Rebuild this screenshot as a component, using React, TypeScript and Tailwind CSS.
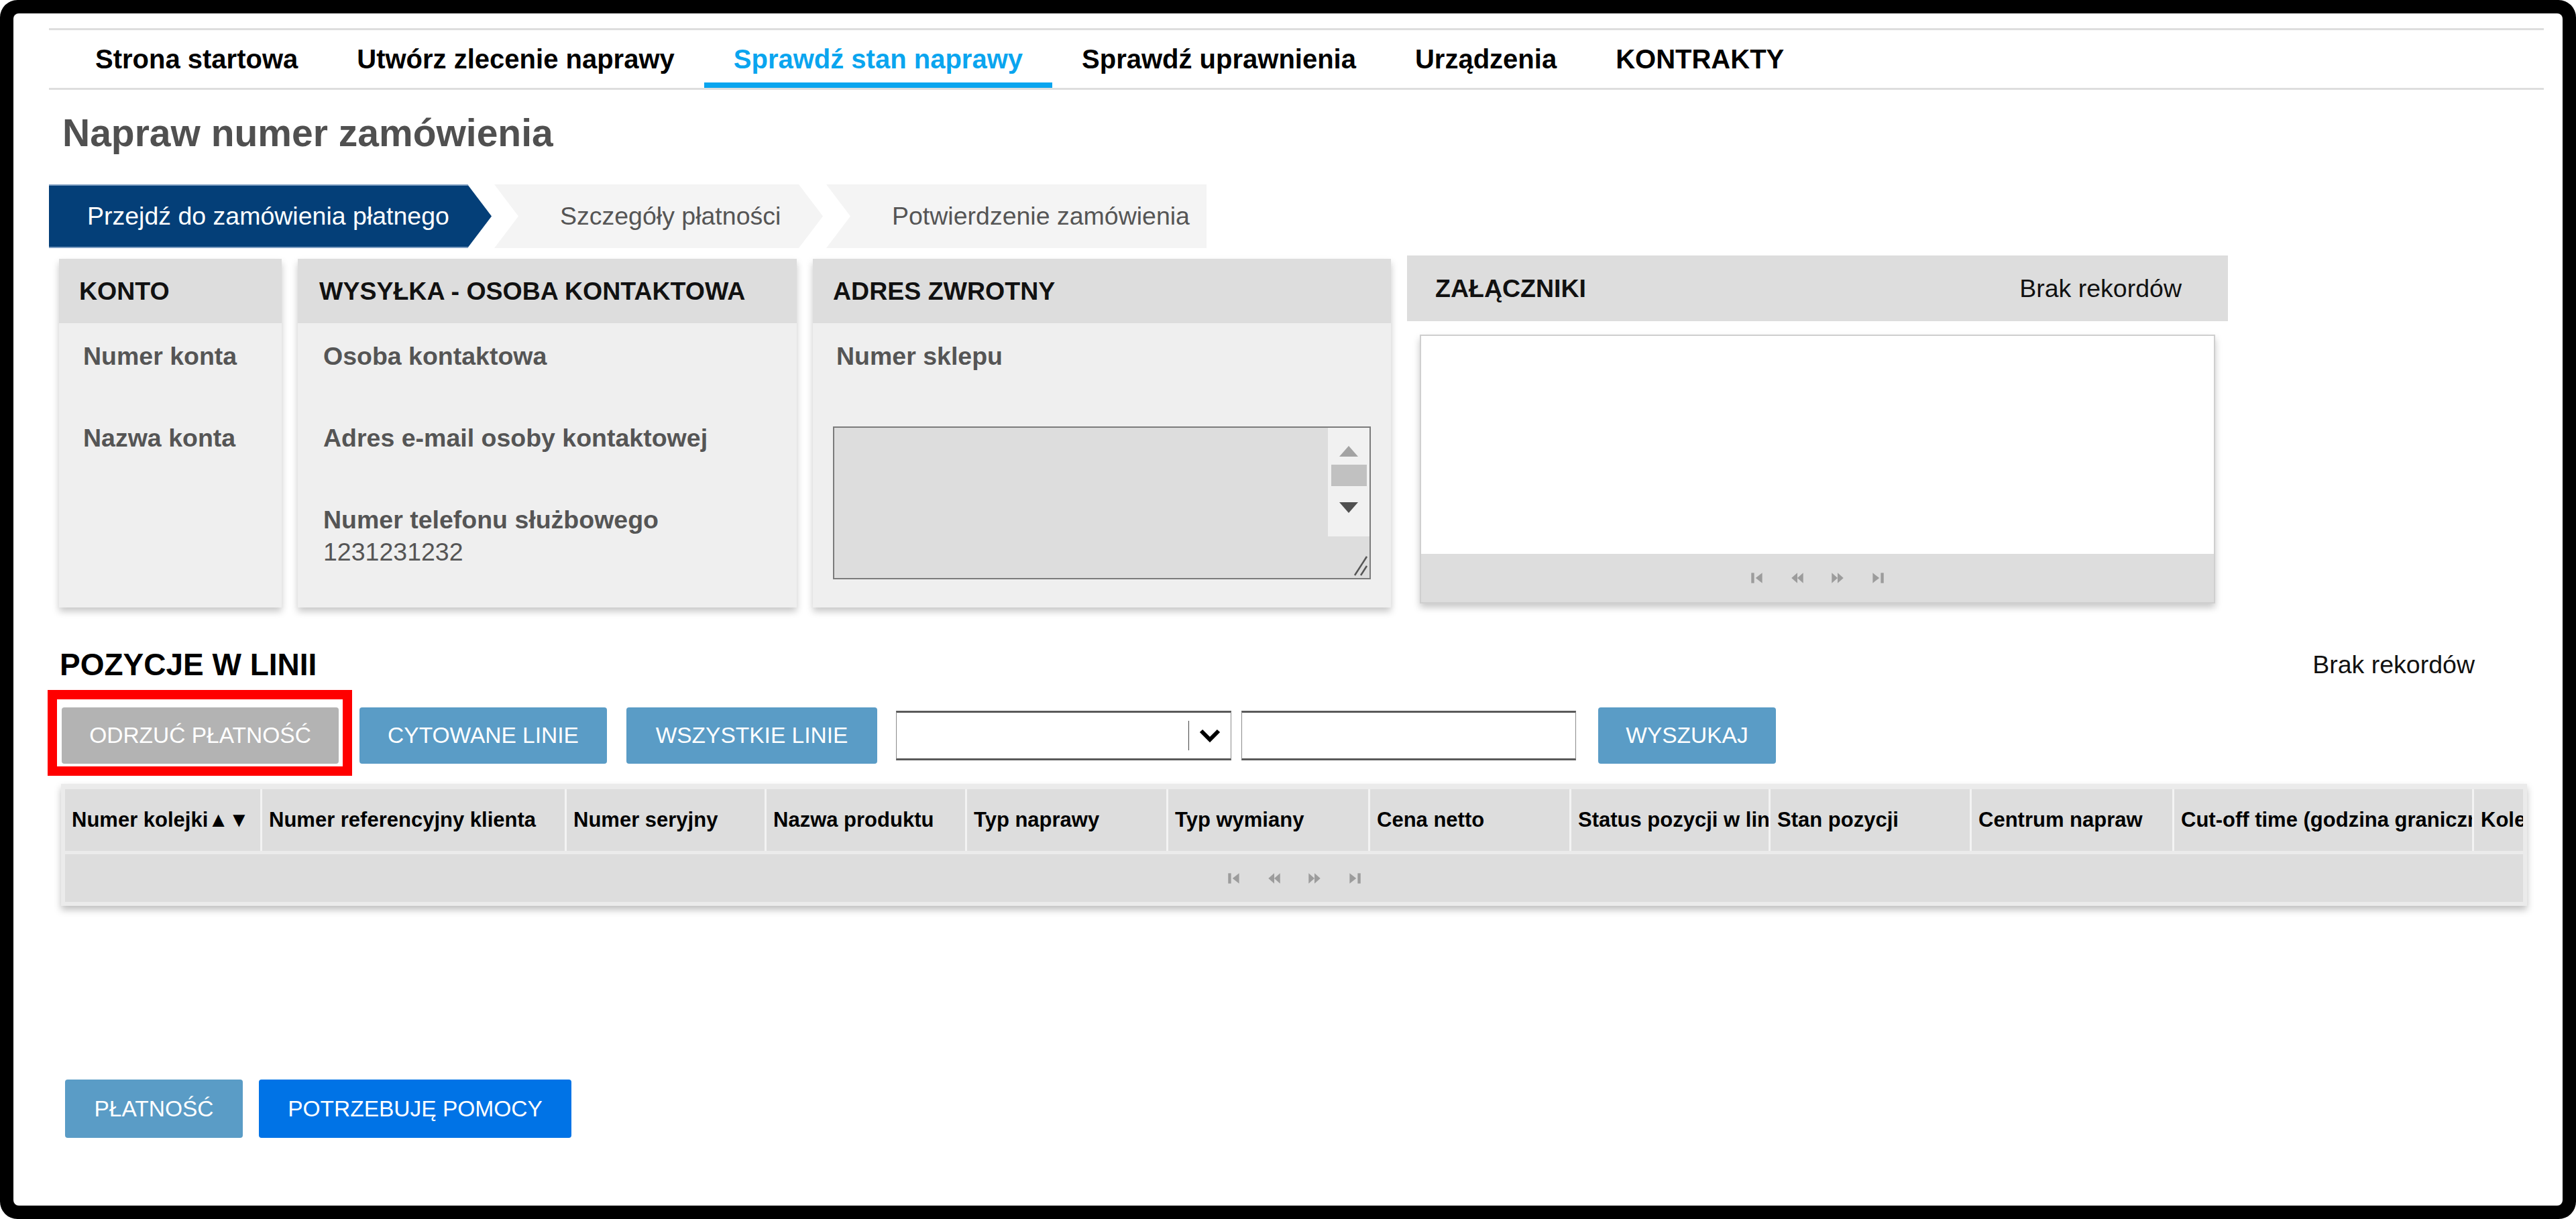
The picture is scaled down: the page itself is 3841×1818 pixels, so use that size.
import React from "react";

const navItems = [
  { label: "Strona startowa", active: false },
  { label: "Utwórz zlecenie naprawy", active: false },
  { label: "Sprawdź stan naprawy", active: true },
  { label: "Sprawdź uprawnienia", active: false },
  { label: "Urządzenia", active: false },
  { label: "KONTRAKTY", active: false },
];

const columns = [
  { label: "Numer kolejki▲▼", w: "w-[294px]" },
  { label: "Numer referencyjny klienta", w: "w-[454px]" },
  { label: "Numer seryjny", w: "w-[298px]" },
  { label: "Nazwa produktu", w: "w-[299px]" },
  { label: "Typ naprawy", w: "w-[300px]" },
  { label: "Typ wymiany", w: "w-[301px]" },
  { label: "Cena netto", w: "w-[300px]" },
  { label: "Status pozycji w linii", w: "w-[297px]" },
  { label: "Stan pozycji", w: "w-[300px]" },
  { label: "Centrum napraw", w: "w-[302px]" },
  { label: "Cut-off time (godzina granicznej)", w: "w-[447px]" },
  { label: "Kolejność", w: "flex-1" },
];

// pager glyphs: first, prev, next, last
function Pager() {
  return (
    <div className="flex items-center gap-[36px] text-[#9c9c9c]">
      <svg width="24" height="28" viewBox="0 0 22 24" fill="currentColor">
        <rect x="3" y="5" width="4" height="14" />
        <path d="M18 5 L9 12 L18 19 Z" />
      </svg>
      <svg width="24" height="28" viewBox="0 0 22 24" fill="currentColor">
        <path d="M11 5 L3 12 L11 19 Z M19 5 L11 12 L19 19 Z" />
      </svg>
      <svg width="24" height="28" viewBox="0 0 22 24" fill="currentColor">
        <path d="M3 5 L11 12 L3 19 Z M11 5 L19 12 L11 19 Z" />
      </svg>
      <svg width="24" height="28" viewBox="0 0 22 24" fill="currentColor">
        <path d="M4 5 L13 12 L4 19 Z" />
        <rect x="15" y="5" width="4" height="14" />
      </svg>
    </div>
  );
}

function Field({ label, value }: { label: string; value?: string }) {
  return (
    <div className="mb-[26px]">
      <div className="h-[48px] whitespace-nowrap text-[37.5px] font-bold leading-[48px] text-[#555]">{label}</div>
      <div className="h-[48px] text-[37.5px] leading-[48px] text-[#555]">{value}</div>
    </div>
  );
}

export default function App() {
  return (
    <div className="min-h-screen w-full bg-white font-['Liberation_Sans',Arial,sans-serif]">
      <div className="h-[1818px] w-[3841px] rounded-[26px] bg-black p-[20px]">
        <div className="flex h-full flex-col overflow-hidden rounded-[8px] bg-white">
          {/* Top navigation */}
          <nav className="ml-[53px] mr-[28px] mt-[22px] flex h-[92px] border-y-[3px] border-[#dedede] pl-[25px]">
            {navItems.map((item) => (
              <div
                key={item.label}
                className={
                  item.active
                    ? "flex items-center whitespace-nowrap border-b-[8px] border-[#0aa5ef] px-[44px] pt-[8px] text-[40px] font-bold text-[#0aa5ef]"
                    : "flex items-center whitespace-nowrap border-b-[8px] border-transparent px-[44px] pt-[8px] text-[40px] font-bold text-black"
                }
              >
                {item.label}
              </div>
            ))}
          </nav>

          <h1 className="ml-[73px] mt-[28px] text-[57px] font-bold leading-[72px] text-[#505050]">Napraw numer zamówienia</h1>

          {/* Stepper */}
          <div className="ml-[53px] mt-[41px] flex h-[95px]">
            <div className="flex w-[660px] items-center whitespace-nowrap border-y-2 border-[#7c9cc0] bg-[#043f78] pl-[57px] text-[37.5px] text-white [clip-path:polygon(0_0,calc(100%_-_36px)_0,100%_50%,calc(100%_-_36px)_100%,0_100%)]">
              Przejdź do zamówienia płatnego
            </div>
            <div className="ml-[4px] flex w-[490px] items-center whitespace-nowrap bg-[#f4f4f4] pl-[98px] text-[37.5px] text-[#555] [clip-path:polygon(0_0,calc(100%_-_36px)_0,100%_50%,calc(100%_-_36px)_100%,0_100%,36px_50%)]">
              Szczegóły płatności
            </div>
            <div className="ml-[5px] flex w-[567px] items-center whitespace-nowrap bg-[#f4f4f4] pl-[98px] text-[37.5px] text-[#555] [clip-path:polygon(0_0,100%_0,100%_100%,0_100%,36px_50%)]">
              Potwierdzenie zamówienia
            </div>
          </div>

          {/* Cards */}
          <div className="ml-[68px] mt-[16px] flex items-start">
            <div className="flex h-[520px] w-[332px] flex-col bg-[#efefef] shadow-[0_6px_10px_rgba(0,0,0,0.22)]">
              <div className="flex h-[96px] items-center bg-[#dddddd] pl-[30px] text-[37.5px] font-bold text-[#111]">KONTO</div>
              <div className="pl-[36px] pt-[25px]">
                <Field label="Numer konta" />
                <Field label="Nazwa konta" />
              </div>
            </div>

            <div className="ml-[24px] flex h-[520px] w-[744px] flex-col bg-[#efefef] shadow-[0_6px_10px_rgba(0,0,0,0.22)]">
              <div className="flex h-[96px] items-center whitespace-nowrap bg-[#dddddd] pl-[32px] text-[37.5px] font-bold text-[#111]">
                WYSYŁKA - OSOBA KONTAKTOWA
              </div>
              <div className="pl-[38px] pt-[25px]">
                <Field label="Osoba kontaktowa" />
                <Field label="Adres e-mail osoby kontaktowej" />
                <Field label="Numer telefonu służbowego" value="1231231232" />
              </div>
            </div>

            <div className="ml-[24px] flex h-[520px] w-[862px] flex-col bg-[#efefef] shadow-[0_6px_10px_rgba(0,0,0,0.22)]">
              <div className="flex h-[96px] items-center bg-[#dddddd] pl-[30px] text-[37.5px] font-bold text-[#111]">ADRES ZWROTNY</div>
              <div className="px-[30px] pt-[25px]">
                <div className="h-[48px] pl-[5px] text-[37.5px] font-bold leading-[48px] text-[#555]">Numer sklepu</div>
                <div className="mt-[81px] flex h-[228px] border-2 border-[#7b7b7b] bg-[#dddddd]">
                  <div className="flex-1" />
                  <div className="flex w-[62px] flex-col">
                    <div className="flex h-[162px] flex-col items-center bg-[#f1f1f1] pt-[27px]">
                      <svg width="28" height="16" viewBox="0 0 28 16" fill="#a3a3a3">
                        <path d="M14 0 L28 16 L0 16 Z" />
                      </svg>
                      <div className="mt-[12px] h-[32px] w-[53px] bg-[#c1c1c1]" />
                      <svg className="mt-[24px]" width="28" height="16" viewBox="0 0 28 16" fill="#505050">
                        <path d="M0 0 L28 0 L14 16 Z" />
                      </svg>
                    </div>
                    <div className="flex flex-1 items-end justify-end pb-[2px] pr-[2px]">
                      <svg width="24" height="34" viewBox="0 0 24 34" stroke="#555" strokeWidth="2.5">
                        <line x1="4" y1="32" x2="22" y2="4" />
                        <line x1="13" y1="32" x2="22" y2="18" />
                      </svg>
                    </div>
                  </div>
                </div>
              </div>
            </div>

            <div className="-mt-[5px] ml-[24px] w-[1224px]">
              <div className="flex h-[98px] items-center justify-between bg-[#dddddd] pl-[42px] pr-[69px]">
                <span className="text-[37.5px] font-bold text-[#111]">ZAŁĄCZNIKI</span>
                <span className="text-[37.5px] text-[#111]">Brak rekordów</span>
              </div>
              <div className="mx-[19px] mt-[20px] flex h-[401px] flex-col border-2 border-[#cfcfcf] bg-white shadow-[0_6px_10px_rgba(0,0,0,0.22)]">
                <div className="flex-1" />
                <div className="flex h-[72px] items-center justify-center bg-[#dddddd]">
                  <Pager />
                </div>
              </div>
            </div>
          </div>

          {/* Line items */}
          <div className="ml-[71px] mt-[57px] w-[3677px]">
            <div className="flex items-center justify-between pr-[78px]">
              <h2 className="-ml-[2px] text-[46px] font-bold leading-[54px] text-black">POZYCJE W LINII</h2>
              <span className="text-[37.5px] text-[#111]">Brak rekordów</span>
            </div>

            <div className="mt-[10px] flex items-start">
              <div className="-ml-[20px] border-[14px] border-[#ff0000] bg-white pb-[4px] pl-[7px] pr-[6px] pt-[12px]">
                <button className="flex h-[84px] w-[413px] items-center justify-center rounded-[4px] bg-[#b3b3b3] text-[33.5px] text-white">
                  ODRZUĆ PŁATNOŚĆ
                </button>
              </div>
              <button className="ml-[11px] mt-[26px] flex h-[84px] w-[369px] items-center justify-center rounded-[4px] bg-[#5a9cc6] text-[33.5px] text-white">
                CYTOWANE LINIE
              </button>
              <button className="ml-[29px] mt-[26px] flex h-[84px] w-[374px] items-center justify-center rounded-[4px] bg-[#5a9cc6] text-[33.5px] text-white">
                WSZYSTKIE LINIE
              </button>
              <div className="ml-[28px] mt-[31px] flex h-[74px] w-[500px] items-center justify-end border border-y-[3px] border-[#8a8a8a] border-y-[#5a5a5a] bg-white">
                <div className="h-[44px] w-px bg-[#444]" />
                <div className="flex w-[62px] items-center justify-center">
                  <svg width="32" height="22" viewBox="0 0 32 22" fill="none" stroke="#000" strokeWidth="6" strokeLinejoin="miter">
                    <polyline points="3,4 16,17 29,4" />
                  </svg>
                </div>
              </div>
              <div className="ml-[15px] mt-[31px] h-[74px] w-[499px] border border-y-[3px] border-[#8a8a8a] border-y-[#5a5a5a] bg-white" />
              <button className="ml-[33px] mt-[26px] flex h-[84px] w-[265px] items-center justify-center rounded-[4px] bg-[#5a9cc6] text-[33.5px] text-white">
                WYSZUKAJ
              </button>
            </div>

            {/* Grid */}
            <div className="mt-[12px] bg-[#ebebeb] px-[6px] pb-[6px] pt-[8px] shadow-[0_6px_10px_rgba(0,0,0,0.25)]">
              <div className="flex h-[92px]">
                {columns.map((col) => (
                  <div
                    key={col.label}
                    className={`${col.w} flex items-center overflow-hidden whitespace-nowrap border-r-[3px] border-[#f3f3f3] bg-[#dddddd] pl-[10px] text-[31px] font-bold text-black last:border-r-0`}
                  >
                    {col.label}
                  </div>
                ))}
              </div>
              <div className="mt-[5px] flex h-[71px] items-center justify-center bg-[#dddddd]">
                <Pager />
              </div>
            </div>
          </div>

          {/* Footer actions */}
          <div className="ml-[77px] mt-[259px] flex">
            <button className="flex h-[87px] w-[265px] items-center justify-center rounded-[4px] bg-[#5a9cc6] text-[33.5px] text-white">
              PŁATNOŚĆ
            </button>
            <button className="ml-[24px] flex h-[87px] w-[466px] items-center justify-center rounded-[4px] bg-[#0073e6] text-[33.5px] text-white">
              POTRZEBUJĘ POMOCY
            </button>
          </div>
        </div>
      </div>
    </div>
  );
}
